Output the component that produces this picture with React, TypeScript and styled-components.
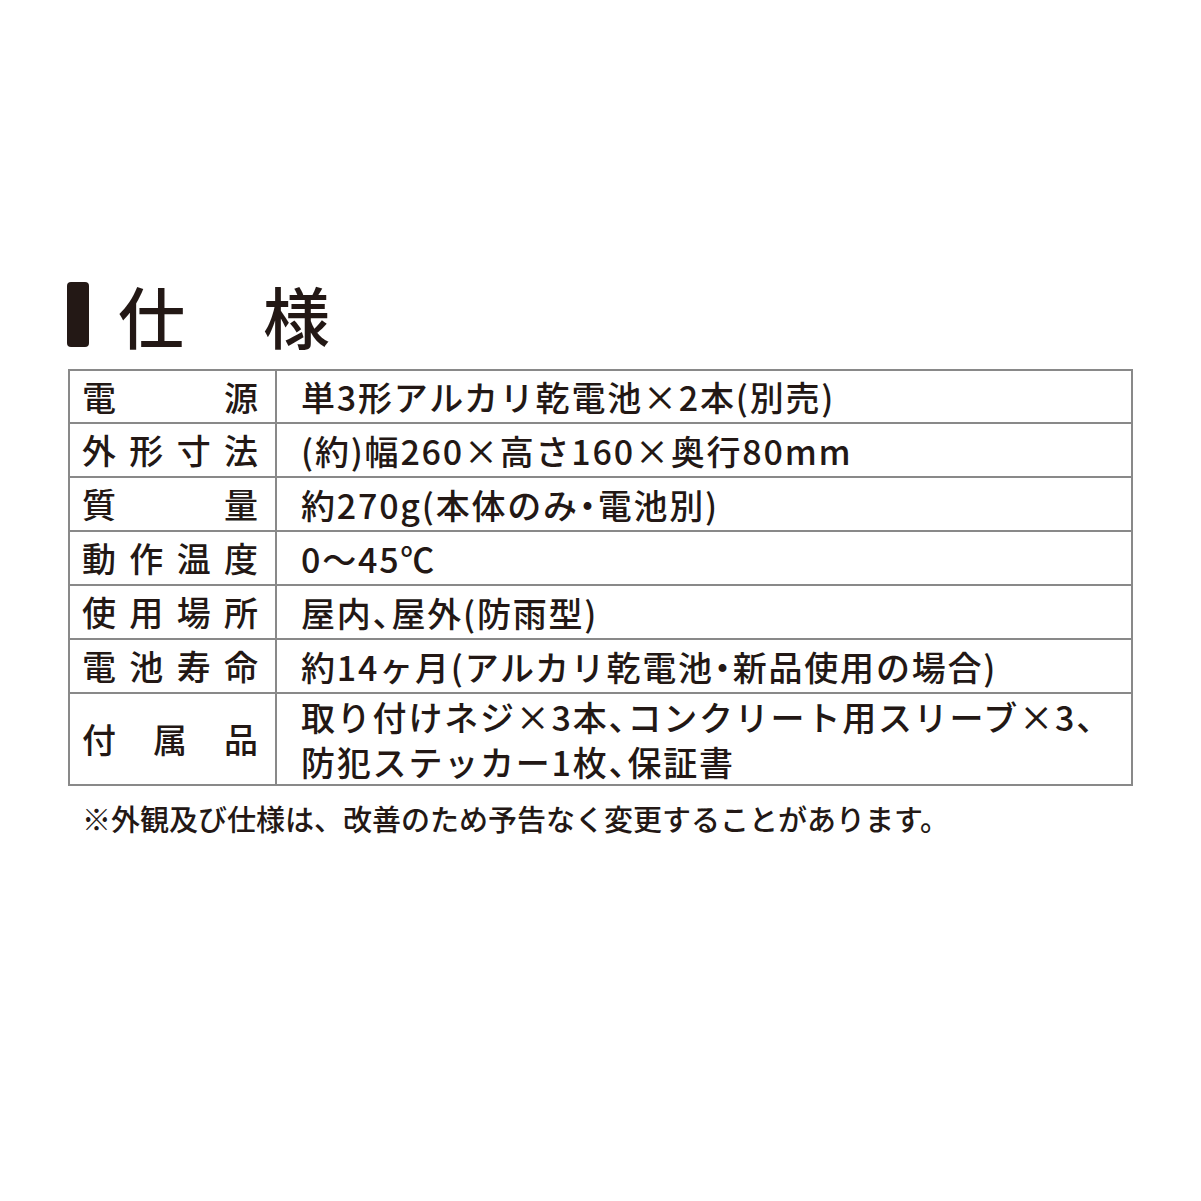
import React from "react";
import styled, { createGlobalStyle } from "styled-components";

const GlobalStyle = createGlobalStyle`
  html, body {
    margin: 0;
    padding: 0;
    background: #ffffff;
  }
  body {
    font-family: "Noto Sans CJK JP", "Noto Sans", sans-serif;
    color: #231815;
  }
`;

const Page = styled.div`
  width: 1201px;
  height: 1201px;
  box-sizing: border-box;
  padding: 281px 0 0 67px;
  background: #ffffff;
`;

const TitleRow = styled.div`
  display: flex;
  align-items: center;
  height: 66px;
  gap: 29px;
`;

const Bar = styled.div`
  width: 22px;
  height: 65px;
  border-radius: 4px;
  background: #231815;
`;

const TitleText = styled.h1`
  margin: 0;
  font-size: 67px;
  line-height: 1;
  font-weight: 500;
  letter-spacing: 78px;
  color: #231815;
`;

const SpecTable = styled.div`
  margin: 22px 0 0 1px;
  width: 1065px;
  box-sizing: border-box;
  border: 2px solid #898989;
  display: grid;
  grid-template-columns: 207px 1fr;
`;

const Label = styled.div<{ $first?: boolean; $tall?: boolean }>`
  box-sizing: border-box;
  height: ${(p) => (p.$first ? 51 : p.$tall ? 92 : 54)}px;
  border-top: ${(p) => (p.$first ? "none" : "2px solid #898989")};
  border-right: 2px solid #898989;
  padding: 0 17px 0 12px;
  display: flex;
  align-items: center;
  font-size: 34px;
  font-weight: 500;
  line-height: 1;
`;

const LabelText = styled.span`
  display: block;
  width: 100%;
  text-align: justify;
  text-align-last: justify;
  text-justify: inter-character;
`;

const Value = styled.div<{ $first?: boolean; $tall?: boolean }>`
  box-sizing: border-box;
  height: ${(p) => (p.$first ? 51 : p.$tall ? 92 : 54)}px;
  border-top: ${(p) => (p.$first ? "none" : "2px solid #898989")};
  padding: 0 0 0 24px;
  display: flex;
  align-items: center;
  font-size: 34px;
  font-weight: 500;
  line-height: 45px;
  letter-spacing: 1.8px;
`;

const ValueLines = styled.span`
  display: block;
`;

const Line = styled.span`
  display: block;
`;

const Punct = styled.span`
  font-feature-settings: "halt";
`;

const Note = styled.p`
  margin: 13px 0 0 15px;
  font-size: 29px;
  line-height: 39px;
  font-weight: 500;
  letter-spacing: 0;
`;

function withPunct(text: string) {
  const parts = text.split(/([、・])/);
  return parts.map((part, i) =>
    part === "、" || part === "・" ? <Punct key={i}>{part}</Punct> : <React.Fragment key={i}>{part}</React.Fragment>
  );
}

const rows: { label: string; value: string[] }[] = [
  { label: "電源", value: ["単3形アルカリ乾電池×2本(別売)"] },
  { label: "外形寸法", value: ["(約)幅260×高さ160×奥行80mm"] },
  { label: "質量", value: ["約270g(本体のみ・電池別)"] },
  { label: "動作温度", value: ["0〜45℃"] },
  { label: "使用場所", value: ["屋内、屋外(防雨型)"] },
  { label: "電池寿命", value: ["約14ヶ月(アルカリ乾電池・新品使用の場合)"] },
  {
    label: "付属品",
    value: ["取り付けネジ×3本、コンクリート用スリーブ×3、", "防犯ステッカー1枚、保証書"],
  },
];

export default function App() {
  return (
    <>
      <GlobalStyle />
      <Page>
        <TitleRow>
          <Bar />
          <TitleText>仕様</TitleText>
        </TitleRow>
        <SpecTable>
          {rows.map((r, i) => (
            <React.Fragment key={r.label}>
              <Label $first={i === 0} $tall={i === rows.length - 1}>
                <LabelText>{r.label}</LabelText>
              </Label>
              <Value $first={i === 0} $tall={i === rows.length - 1}>
                <ValueLines>
                  {r.value.map((line) => (
                    <Line key={line}>{withPunct(line)}</Line>
                  ))}
                </ValueLines>
              </Value>
            </React.Fragment>
          ))}
        </SpecTable>
        <Note>※外観及び仕様は、改善のため予告なく変更することがあります。</Note>
      </Page>
    </>
  );
}
